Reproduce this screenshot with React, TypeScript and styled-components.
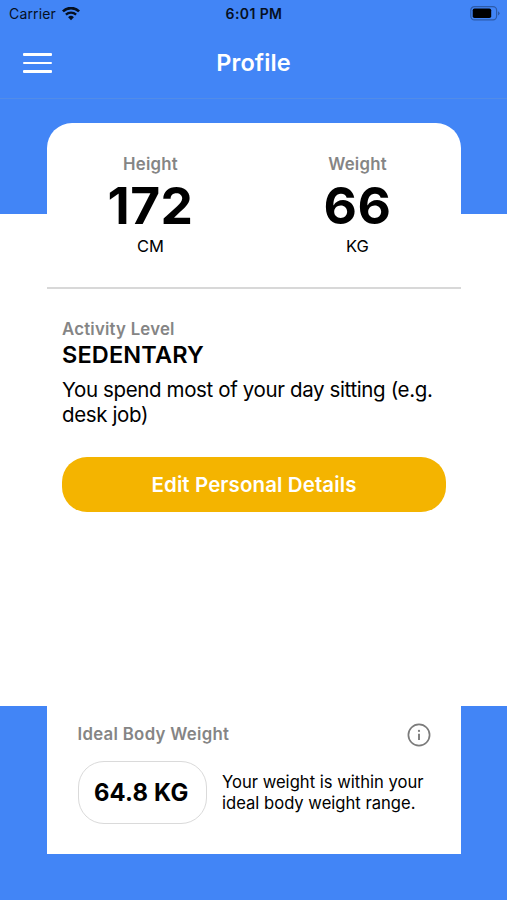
import React from "react";
import styled, { createGlobalStyle } from "styled-components";

const blue = "#4285f6";

const GlobalStyle = createGlobalStyle`
  *, *::before, *::after { box-sizing: border-box; }
  body { margin: 0; background: #fff; }
  h1, h2, p { margin: 0; }
`;

const Screen = styled.main`
  display: flex;
  flex-direction: column;
  height: 900px;
  overflow: hidden;
  font-family: Inter, "Liberation Sans", sans-serif;
  color: #000;
  background: linear-gradient(${blue} 214.5px, #fff 214.5px, #fff 706.3px, ${blue} 706.3px);
`;

const StatusBar = styled.div`
  display: grid;
  grid-template-columns: 1fr auto 1fr;
  align-items: center;
  flex: none;
  height: 27px;
  padding: 0 7px 0 9px;
  color: #06101f;
  font-size: 14px;
  line-height: 20px;
`;

const Carrier = styled.div`
  display: flex;
  align-items: center;
  gap: 6px;
  letter-spacing: 0.15px;
`;

const Clock = styled.div`
  margin-right: 1px;
  font-weight: 600;
  letter-spacing: 0.4px;
`;

const BatteryIcon = styled.svg`
  justify-self: end;
`;

const Header = styled.header`
  display: grid;
  grid-template-columns: 1fr auto 1fr;
  align-items: center;
  flex: none;
  height: 72px;
  padding: 1px 23px 0;
  border-bottom: 1.5px solid #528ce8;
`;

const MenuButton = styled.button`
  display: grid;
  gap: 6px;
  width: 29px;
  padding: 0;
  border: 0;
  background: none;
`;

const MenuLine = styled.span`
  height: 2.6px;
  border-radius: 1px;
  background: #fff;
`;

const Title = styled.h1`
  color: #fff;
  font-size: 23.5px;
  font-weight: 600;
  line-height: 28px;
  letter-spacing: 0.1px;
`;

const Card = styled.section`
  display: flex;
  flex-direction: column;
  flex: none;
  height: 731px;
  margin: 24px 46px 0 47px;
  border-radius: 25px 25px 0 0;
  background: #fff;
`;

const Stats = styled.div`
  display: grid;
  grid-template-columns: 1fr 1fr;
  height: 166px;
  padding-top: 30px;
  border-bottom: 2px solid #d8d8d8;
`;

const Stat = styled.div`
  display: flex;
  flex-direction: column;
  align-items: center;
`;

const Label = styled.h2<{ $spacing?: string }>`
  color: #858585;
  font-size: 16.8px;
  font-weight: 600;
  line-height: 22px;
  letter-spacing: ${(p) => p.$spacing ?? "0.22px"};
`;

const StatValue = styled.div`
  margin-top: 4px;
  font-size: 51.5px;
  font-weight: 700;
  line-height: 52px;
  letter-spacing: 0.5px;
`;

const Unit = styled.div`
  margin-top: 5px;
  font-size: 16.5px;
  line-height: 20px;
`;

const Activity = styled.div`
  display: flex;
  flex-direction: column;
  padding: 29px 15px 0;
`;

const Level = styled.p`
  margin-top: 1px;
  font-size: 23.5px;
  font-weight: 600;
  line-height: 28px;
  letter-spacing: 0.15px;
`;

const Description = styled.p`
  margin-top: 8px;
  font-size: 20.5px;
  line-height: 25px;
  letter-spacing: -0.37px;
  white-space: nowrap;
`;

const EditButton = styled.button`
  height: 55px;
  margin-top: 29.5px;
  padding: 1px 0 0;
  border: 0;
  border-radius: 25px;
  background: #f4b400;
  color: #fff;
  font: 600 20.5px/26px Inter, "Liberation Sans", sans-serif;
  letter-spacing: 0.1px;
`;

const Ideal = styled.div`
  margin-top: auto;
  padding: 0 30.5px 30.5px 30.5px;
`;

const IdealHeader = styled.div`
  display: flex;
  justify-content: space-between;
  height: 24px;
`;

const IdealBody = styled.div`
  display: flex;
  align-items: center;
  gap: 15px;
  margin-top: 14px;
`;

const WeightPill = styled.div`
  display: grid;
  place-items: center;
  flex: none;
  width: 129.5px;
  height: 63px;
  padding-right: 2px;
  border: 1.5px solid #dadada;
  border-radius: 26px;
  font-size: 23.8px;
  font-weight: 700;
  letter-spacing: 0.2px;
`;

const Note = styled.p`
  padding-top: 2px;
  font-size: 16.6px;
  line-height: 21px;
  white-space: nowrap;
`;

function WifiIcon() {
  return (
    <svg width="18" height="14" viewBox="0 0 18 14" fill="none">
      <path d="M0.9 4.4A11.6 11.6 0 0 1 17.1 4.4" stroke="#06101f" strokeWidth="2.7" />
      <path d="M3.9 7.6A7.4 7.4 0 0 1 14.1 7.6" stroke="#06101f" strokeWidth="2.3" />
      <path d="M6.1 10.2A4.1 4.1 0 0 1 11.9 10.2L9 13.2Z" fill="#06101f" />
    </svg>
  );
}

function Battery() {
  return (
    <BatteryIcon width="30" height="15" viewBox="0 0 30 15" fill="none">
      <rect x="0.8" y="0.7" width="25.8" height="13.2" rx="3.6" stroke="#2d5ba9" strokeWidth="1.2" />
      <rect x="2.7" y="2.5" width="18.5" height="9.5" rx="1.8" fill="#000" />
      <path d="M28 5.2Q29.6 6 29.6 7.3T28 9.5Z" fill="#2d5ba9" />
    </BatteryIcon>
  );
}

function InfoIcon() {
  return (
    <svg width="24" height="24" viewBox="0 0 24 24" fill="none">
      <circle cx="12" cy="12" r="10.6" stroke="#7b7b7b" strokeWidth="1.7" />
      <circle cx="12" cy="7.9" r="1.1" fill="#7b7b7b" />
      <path d="M12 10.8V17" stroke="#7b7b7b" strokeWidth="1.9" />
    </svg>
  );
}

export default function App() {
  return (
    <>
      <GlobalStyle />
      <Screen>
        <StatusBar>
          <Carrier>
            Carrier
            <WifiIcon />
          </Carrier>
          <Clock>6:01 PM</Clock>
          <Battery />
        </StatusBar>
        <Header>
          <MenuButton aria-label="Menu">
            <MenuLine />
            <MenuLine />
            <MenuLine />
          </MenuButton>
          <Title>Profile</Title>
        </Header>
        <Card>
          <Stats>
            <Stat>
              <Label>Height</Label>
              <StatValue>172</StatValue>
              <Unit>CM</Unit>
            </Stat>
            <Stat>
              <Label>Weight</Label>
              <StatValue>66</StatValue>
              <Unit>KG</Unit>
            </Stat>
          </Stats>
          <Activity>
            <Label>Activity Level</Label>
            <Level>SEDENTARY</Level>
            <Description>
              You spend most of your day sitting (e.g.
              <br />
              desk job)
            </Description>
            <EditButton>Edit Personal Details</EditButton>
          </Activity>
          <Ideal>
            <IdealHeader>
              <Label $spacing="0.3px">Ideal Body Weight</Label>
              <InfoIcon />
            </IdealHeader>
            <IdealBody>
              <WeightPill>64.8 KG</WeightPill>
              <Note>
                Your weight is within your
                <br />
                ideal body weight range.
              </Note>
            </IdealBody>
          </Ideal>
        </Card>
      </Screen>
    </>
  );
}
